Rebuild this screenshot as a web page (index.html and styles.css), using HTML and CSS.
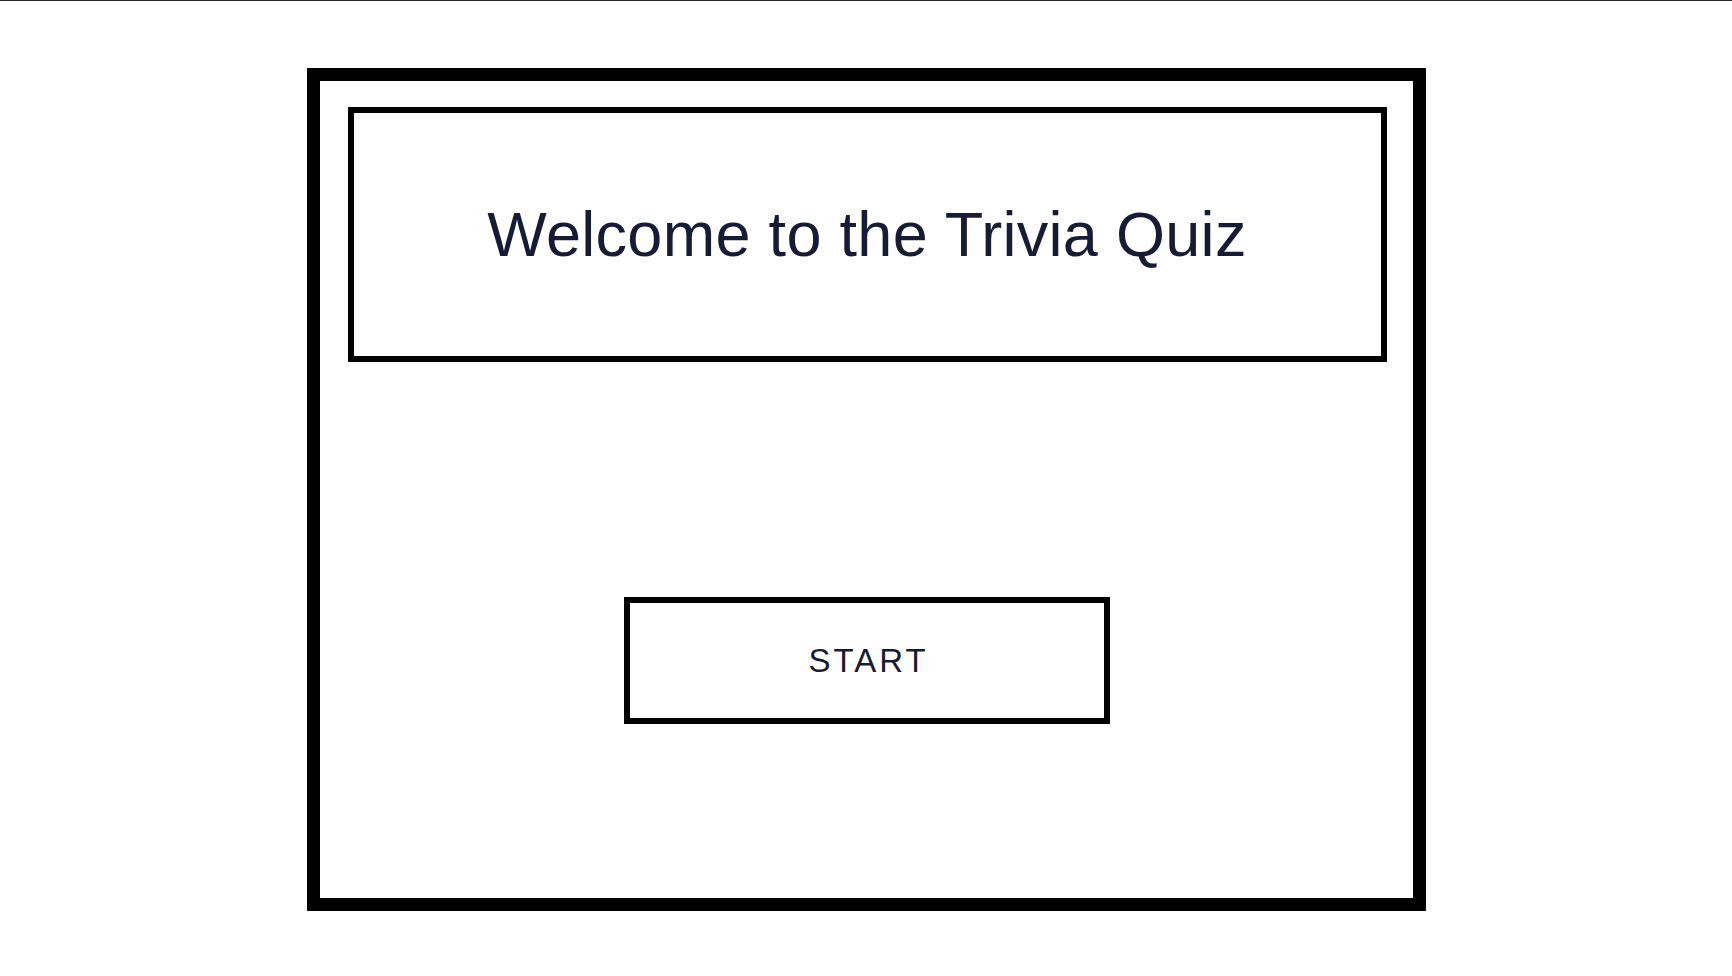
FILE: index.html
```html
<!DOCTYPE html>
<html lang="en">
<head>
<meta charset="utf-8">
<title>Trivia Quiz</title>
<link rel="stylesheet" href="styles.css">
</head>
<body>
<div class="page">
  <main class="frame">
    <header class="banner">
      <h1 class="title">Welcome to the Trivia Quiz</h1>
    </header>
    <div class="actions">
      <button class="start" type="button">START</button>
    </div>
  </main>
</div>
</body>
</html>
```
FILE: styles.css
```css
html, body {
  margin: 0;
  padding: 0;
  background: #ffffff;
}
body {
  font-family: "Liberation Sans", Arial, sans-serif;
  color: #171c36;
}
.page {
  border-top: 1px solid #2a2a2a;
  padding-top: 67px;
  display: flex;
  justify-content: center;
  padding-left: 1px;
}
.frame {
  box-sizing: border-box;
  width: 1119px;
  height: 843px;
  border: 13px solid #000;
  padding: 26px 26px 0 27px;
  display: flex;
  flex-direction: column;
  align-items: center;
}
.banner {
  box-sizing: border-box;
  width: 1039px;
  height: 255px;
  border: 6px solid #000;
  display: flex;
  align-items: center;
  justify-content: center;
}
.title {
  margin: 0;
  font-weight: 400;
  font-size: 63px;
  letter-spacing: 0.3px;
  line-height: 1;
  color: #171c36;
}
.actions {
  margin-top: 235px;
  display: flex;
  justify-content: center;
  width: 100%;
}
.start {
  box-sizing: border-box;
  width: 486px;
  height: 127px;
  border: 6px solid #000;
  background: #fff;
  font-family: "Liberation Sans", Arial, sans-serif;
  font-size: 33px;
  letter-spacing: 3px;
  color: #171c36;
  padding: 0 0 0 3px;
  cursor: pointer;
}
```
